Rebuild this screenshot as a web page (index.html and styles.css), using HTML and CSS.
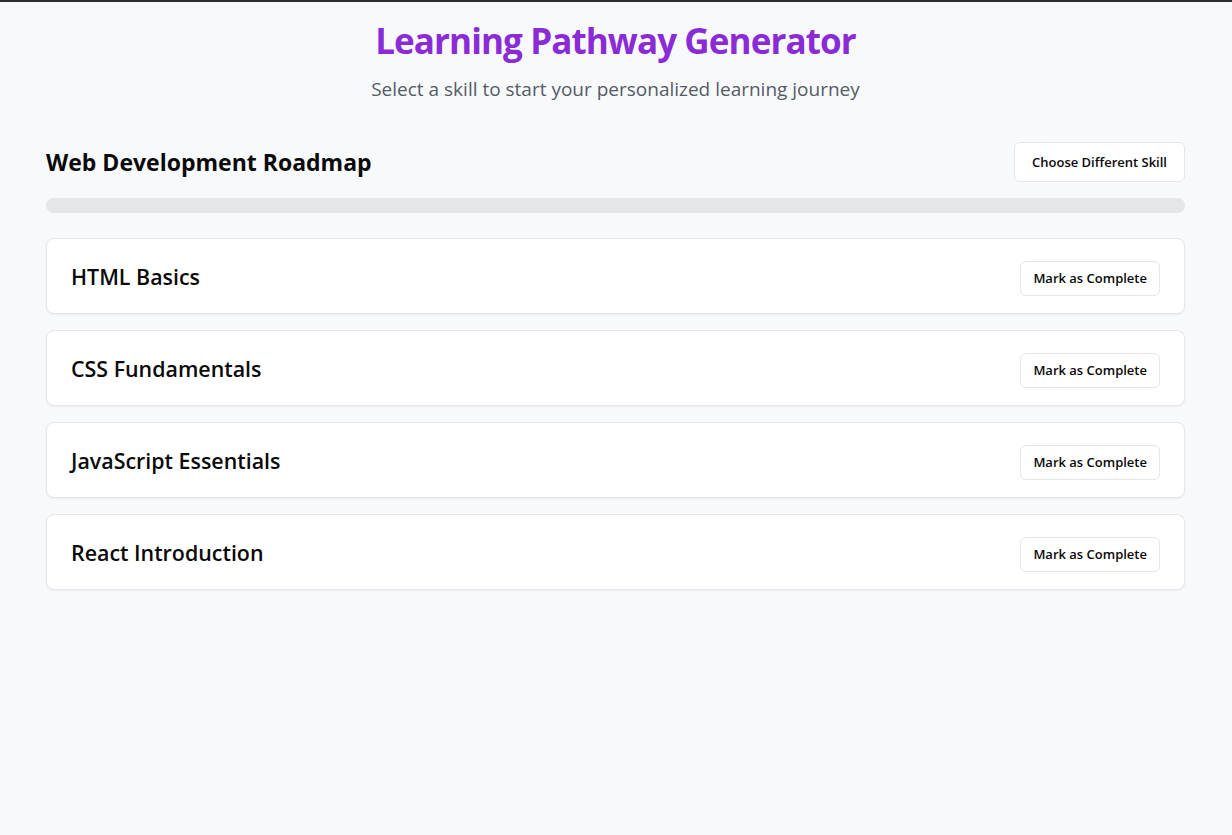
FILE: index.html
```html
<!DOCTYPE html>
<html lang="en">
<head>
<meta charset="utf-8">
<title>Learning Pathway Generator</title>
<link rel="stylesheet" href="styles.css">
</head>
<body>
<div class="app">
  <header class="hero">
    <h1 class="title">Learning Pathway Generator</h1>
    <p class="subtitle">Select a skill to start your personalized learning journey</p>
  </header>
  <section class="roadmap">
    <div class="roadmap-head">
      <h2 class="roadmap-title">Web Development Roadmap</h2>
      <button class="btn btn-lg">Choose Different Skill</button>
    </div>
    <div class="progress"><div class="progress-fill" style="width:0%"></div></div>
    <ul class="steps">
      <li class="step"><h3 class="step-title">HTML Basics</h3><button class="btn">Mark as Complete</button></li>
      <li class="step"><h3 class="step-title">CSS Fundamentals</h3><button class="btn">Mark as Complete</button></li>
      <li class="step"><h3 class="step-title">JavaScript Essentials</h3><button class="btn">Mark as Complete</button></li>
      <li class="step"><h3 class="step-title">React Introduction</h3><button class="btn">Mark as Complete</button></li>
    </ul>
  </section>
</div>
</body>
</html>
```
FILE: styles.css
```css
* { box-sizing: border-box; }
html, body { margin: 0; padding: 0; }
body {
  background: #f8f9fb;
  border-top: 2px solid #2e2e2e;
  font-family: "Open Sans", "Noto Sans", sans-serif;
  color: #0a0a0a;
  min-height: 100vh;
}
.app { padding: 0 47px 0 46px; }
.hero { text-align: center; padding-top: 17px; }
.title {
  margin: 0;
  font-size: 35px;
  line-height: 43px;
  font-weight: 700;
  color: #8a2bd6;
  letter-spacing: -0.9px;
}
.subtitle {
  margin: 14px 0 0;
  font-size: 19px;
  line-height: 27px;
  color: #555b66;
}
.roadmap { margin-top: 39px; }
.roadmap-head {
  display: flex;
  align-items: center;
  justify-content: space-between;
}
.roadmap-title {
  margin: 0;
  font-size: 23px;
  font-weight: 700;
  line-height: 30px;
}
.btn {
  font-family: inherit;
  background: #fff;
  border: 1px solid #e3e6ec;
  border-radius: 6px;
  font-size: 13px;
  font-weight: 600;
  color: #0a0a0a;
  height: 35px;
  padding: 0 12px;
}
.btn-lg { height: 40px; padding: 0 17px; }
.progress {
  margin-top: 16px;
  height: 15px;
  border-radius: 8px;
  background: #e5e6e9;
  overflow: hidden;
}
.progress-fill { height: 100%; background: #8a2bd6; }
.steps {
  list-style: none;
  margin: 25px 0 0;
  padding: 0;
  display: flex;
  flex-direction: column;
  gap: 16px;
}
.step {
  display: flex;
  align-items: center;
  justify-content: space-between;
  height: 76px;
  padding: 20px 24px 16px;
  background: #fff;
  border: 1px solid #e3e6ec;
  border-radius: 8px;
  box-shadow: 0 1px 2px rgba(0,0,0,0.05);
}
.step-title {
  margin: 0 0 3px;
  font-size: 21.4px;
  font-weight: 600;
  line-height: 30px;
}
```
